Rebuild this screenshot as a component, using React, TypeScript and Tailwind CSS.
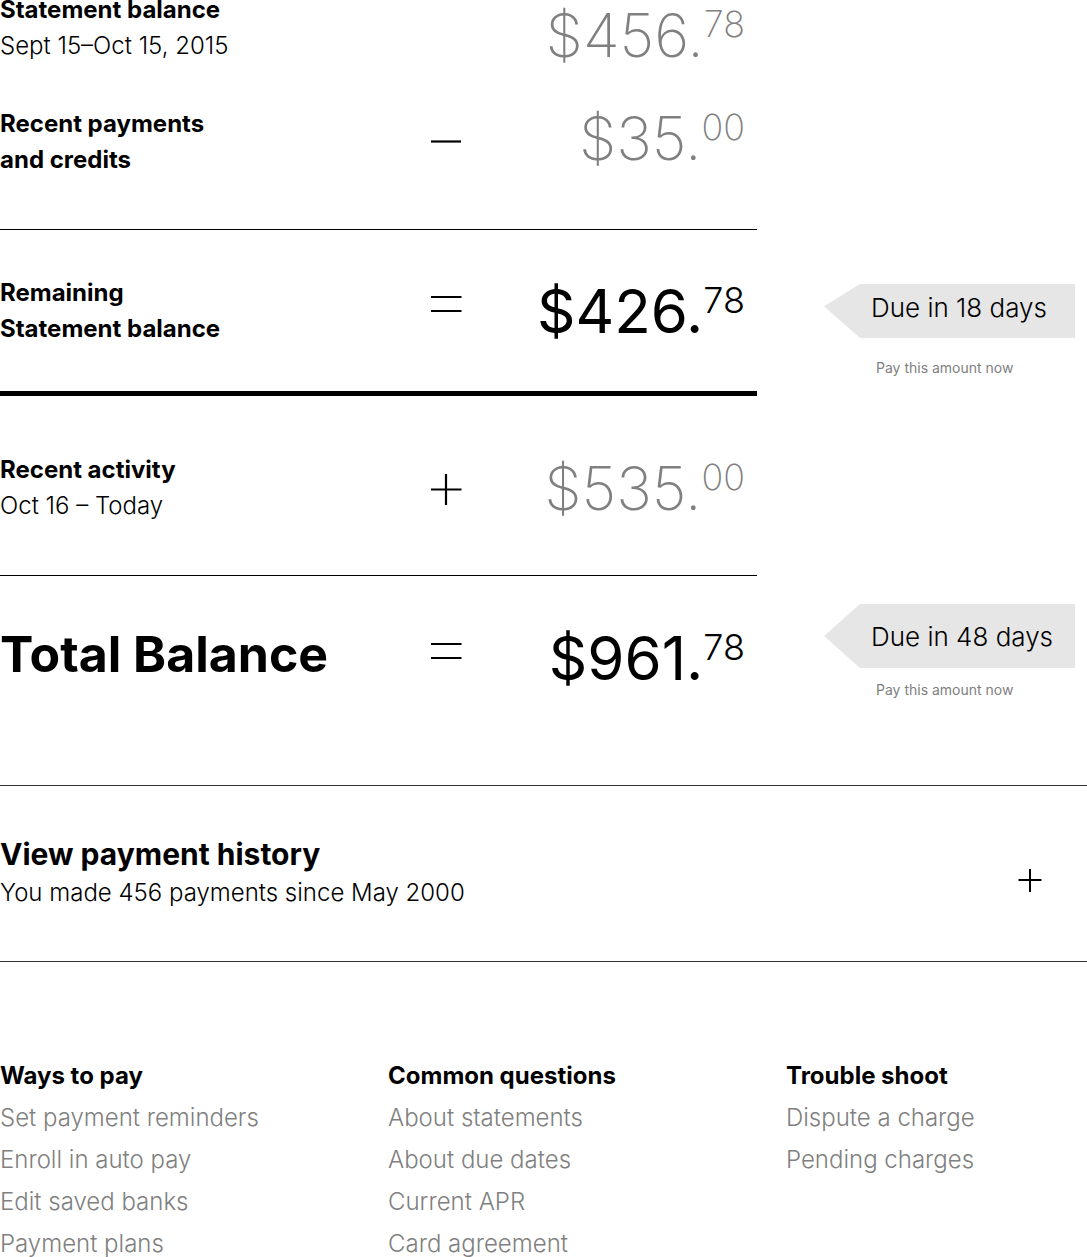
import type { ReactNode } from "react";

type Operator = "minus" | "equals" | "plus";

const operatorPaths: Record<Operator, string> = {
  minus: "M1 35.5H31",
  equals: "M1 10H31.5M1 24H31.5",
  plus: "M1 25.5H31.5M16 10V41",
};

function OperatorIcon({ type }: { type: Operator }) {
  return (
    <svg className="h-12 w-8 shrink-0" viewBox="0 0 32 48" fill="none" stroke="black" strokeWidth="2.2" role="img" aria-label={type}>
      <path d={operatorPaths[type]} />
    </svg>
  );
}

function Amount({ dollars, cents, strong = false }: { dollars: string; cents: string; strong?: boolean }) {
  return (
    <div
      className={
        strong
          ? "flex items-start justify-end text-6xl leading-[64px] font-normal text-black"
          : "flex items-start justify-end text-6xl leading-[64px] font-extralight text-[#808080]"
      }
    >
      <span>{dollars}.</span>
      <span className={strong ? "text-4xl leading-[42px] font-light" : "text-4xl leading-[42px] font-extralight"}>{cents}</span>
    </div>
  );
}

function Row({ label, operator, amount, className = "items-center" }: { label: ReactNode; operator?: Operator; amount: ReactNode; className?: string }) {
  return (
    <div className={"flex pr-3 " + className}>
      <div className="w-[430px] shrink-0 self-start">{label}</div>
      {operator && <OperatorIcon type={operator} />}
      <div className="flex-1">{amount}</div>
    </div>
  );
}

function Label({ title, detail }: { title: string; detail: string }) {
  return (
    <>
      <h2 className="font-bold">{title}</h2>
      <p className="font-light">{detail}</p>
    </>
  );
}

const payLink = "ml-[52px] block text-sm leading-5 text-[#808080]";

const footer = [
  { title: "Ways to pay", links: ["Set payment reminders", "Enroll in auto pay", "Edit saved banks", "Payment plans"] },
  { title: "Common questions", links: ["About statements", "About due dates", "Current APR", "Card agreement"] },
  { title: "Trouble shoot", links: ["Dispute a charge", "Pending charges"] },
];

export default function App() {
  return (
    <main className="overflow-hidden bg-white font-['Inter',sans-serif] text-2xl leading-9 text-black">
      <section className="-mt-2 grid grid-cols-[1fr_330px]">
        <div className="border-b border-black pb-[51px]">
          <Row
            className="h-[75px] items-end"
            label={<Label title="Statement balance" detail="Sept 15–Oct 15, 2015" />}
            amount={<Amount dollars="$456" cents="78" />}
          />
          <div className="pt-[39px]">
            <Row
              className="items-start"
              label={
                <h2 className="font-bold">
                  Recent payments
                  <br />
                  and credits
                </h2>
              }
              operator="minus"
              amount={<Amount dollars="$35" cents="00" />}
            />
          </div>
        </div>
      </section>

      <section className="grid grid-cols-[1fr_330px]">
        <div className="border-b-[5px] border-black pt-[45px] pb-11">
          <Row
            label={
              <h2 className="font-bold">
                Remaining
                <br />
                Statement balance
              </h2>
            }
            operator="equals"
            amount={<Amount dollars="$426" cents="78" strong />}
          />
        </div>
        <div className="pt-[54px] pr-3 pl-[67px]">
          <div className="bg-[#e6e6e6] pb-1.5 pl-[47px] text-[26px] leading-[48px] font-light [clip-path:polygon(0_41%,36px_0,100%_0,100%_100%,36px_100%)]">
            Due in 18 days
          </div>
          <a href="#pay-statement" className={"mt-5 " + payLink}>Pay this amount now</a>
        </div>
      </section>

      <section className="grid grid-cols-[1fr_330px]">
        <div className="border-b border-black pt-14 pb-[51px]">
          <Row
            label={<Label title="Recent activity" detail="Oct 16 – Today" />}
            operator="plus"
            amount={<Amount dollars="$535" cents="00" />}
          />
        </div>
      </section>

      <section className="grid grid-cols-[1fr_330px] border-b border-[#333333]">
        <div className="pt-[50px] pb-[95px]">
          <Row
            label={<h2 className="text-[50px] leading-[56px] font-bold">Total Balance</h2>}
            operator="equals"
            amount={<Amount dollars="$961" cents="78" strong />}
          />
        </div>
        <div className="pt-7 pr-3 pl-[67px]">
          <div className="bg-[#e6e6e6] pt-0.5 pl-[47px] text-[26px] leading-[62px] font-light [clip-path:polygon(0_50%,36px_0,100%_0,100%_100%,36px_100%)]">
            Due in 48 days
          </div>
          <a href="#pay-total" className={"mt-3 " + payLink}>Pay this amount now</a>
        </div>
      </section>

      <section className="flex items-end justify-between border-b border-[#333333] pt-12 pr-[26px] pb-[50px]">
        <div>
          <h2 className="text-3xl leading-[41px] font-bold">View payment history</h2>
          <p className="font-light">You made 456 payments since May 2000</p>
        </div>
        <button type="button" aria-label="View payment history" className="flex size-[62px] items-center justify-center">
          <svg className="size-6" viewBox="0 0 24 24" fill="none" stroke="black" strokeWidth="2">
            <path d="M0.5 12H23.5M12 1V24" />
          </svg>
        </button>
      </section>

      <footer className="-mb-1 grid grid-cols-[388fr_398fr_301fr] pt-24">
        {footer.map((column) => (
          <nav key={column.title} aria-label={column.title}>
            <h3 className="font-bold">{column.title}</h3>
            <ul className="mt-1.5 flex flex-col gap-1.5">
              {column.links.map((link) => (
                <li key={link}>
                  <a href="#help" className="font-light text-[#808080]">{link}</a>
                </li>
              ))}
            </ul>
          </nav>
        ))}
      </footer>
    </main>
  );
}
